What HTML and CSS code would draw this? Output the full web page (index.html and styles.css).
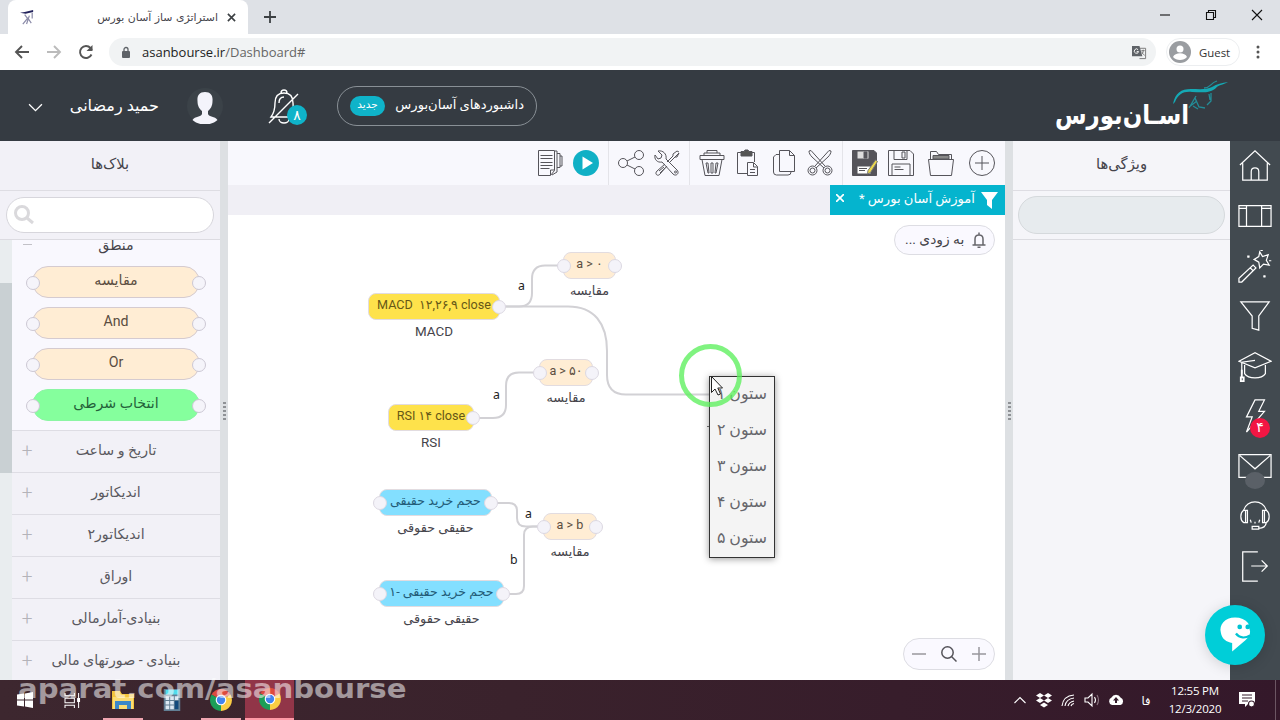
FILE: index.html
```html
<!DOCTYPE html>
<html lang="fa">
<head>
    <meta charset="UTF-8">
    <meta name="viewport" content="width=device-width, initial-scale=1.0">
    <title>استراتژی ساز آسان بورس</title>
    <link rel="stylesheet" href="styles.css">
</head>
<body>
<!-- Browser window -->
<div class="tabstrip">
    <div class="browser-tab">
        <svg class="favicon" viewBox="0 0 16 16"><path d="M0 3l5-1 9-2v2L6 4z" fill="#23235c"/><path d="M5 5l3 4-5 6M8 8l4 6M13 3v6M10 6l-3 9" fill="none" stroke="#8b8ba8" stroke-width="1.3"/></svg>
        <span class="tab-title" dir="rtl">استراتژی ساز آسان بورس</span>
        <svg class="tab-close" viewBox="0 0 10 10"><path d="M1 1l8 8M9 1l-8 8"/></svg>
    </div>
    <svg class="new-tab" viewBox="0 0 12 12"><path d="M6 0v12M0 6h12"/></svg>
    <div class="window-buttons">
        <svg viewBox="0 0 12 12"><path d="M1 6h10"/></svg>
        <svg viewBox="0 0 12 12"><path d="M1.5 3.5h7v7h-7zM3.5 3.5v-2h7v7h-2"/></svg>
        <svg viewBox="0 0 12 12"><path d="M1 1l10 10M11 1L1 11"/></svg>
    </div>
</div>
<div class="addressbar">
    <svg class="nav-icon" viewBox="0 0 16 16"><path d="M15 8H2M8 2L2 8l6 6"/></svg>
    <svg class="nav-icon disabled" viewBox="0 0 16 16"><path d="M1 8h13M8 2l6 6-6 6"/></svg>
    <svg class="nav-icon" viewBox="0 0 16 16"><path d="M13.5 10.500A6 6 0 1 1 12.500 4L14 6"/><path d="M14.500 1v6h-6z" fill="#555" stroke="none"/></svg>
    <div class="omnibox">
        <svg class="lock" viewBox="0 0 10 12"><rect x="1" y="4.500" width="8" height="7" rx="1" fill="#5f6368"/><path d="M3 5V3a2 2 0 0 1 4 0v2" fill="none" stroke="#5f6368" stroke-width="1.300"/></svg>
        <span class="url">asanbourse.ir<span>/Dashboard#</span></span>
        <svg class="translate" viewBox="0 0 16 16"><path d="M0 1h8l3 11H0z" fill="#5f6368"/><path d="M8.500 3.500h6v11H8M10 6h3.500M12 5v1c0 2-1 4-3 5M10.500 7c.5 2 1.500 3 3 4" fill="none" stroke="#777"/><path d="M6.500 5A2.300 2.300 0 1 0 7 7H5" fill="none" stroke="#fff"/></svg>
    </div>
    <div class="profile">
        <svg viewBox="0 0 22 22"><circle cx="11" cy="11" r="11" fill="#9a9da1"/><circle cx="11" cy="8" r="3.500" fill="#fff"/><path d="M4 16c2-5 12-5 14 0-3 4-11 4-14 0z" fill="#fff"/></svg>
        <span>Guest</span>
    </div>
    <svg class="kebab" viewBox="0 0 4 14"><circle cx="2" cy="2" r="1.500"/><circle cx="2" cy="7" r="1.500"/><circle cx="2" cy="12" r="1.500"/></svg>
</div>

<!-- Site header -->
<header class="header">
    <svg class="chevron" viewBox="0 0 14 8"><path d="M1 1l6 6 6-6"/></svg>
    <span class="user-name" dir="rtl">حمید رمضانی</span>
    <svg class="avatar" viewBox="0 0 36 36"><circle cx="18" cy="18" r="18" fill="#3b4248"/><path d="M18 4c-6 0-8 4-7.500 9 0 5 2 8 4.500 10v3c-1 3-7 2-9.500 6 6 6 19 6 25 0-2.500-4-8.500-3-9.500-6v-3c2.500-2 4.500-5 4.500-10C26 8 24 4 18 4z" fill="#f4f4fb"/></svg>
    <div class="bell">
        <svg viewBox="0 0 32 38"><path d="M3 30c3-4 4-7 4-14 0-6 3-10 9-10s9 4 9 10c0 7 1 10 4 14zM13 6a3 3 0 1 1 6 0M11 32a5 4 0 0 0 10 0M1 36L30 7M11 16c0-4 2-6 5-6"/></svg>
        <span class="bell-count">۸</span>
    </div>
    <div class="dashboards">
        <span class="badge-new">جدید</span>
        <span class="dashboards-text" dir="rtl">داشبوردهای آسان‌بورس</span>
    </div>
    <div class="logo">
        <span class="logo-text" dir="rtl">اسـان‌بورس</span>
        <svg class="logo-cat" viewBox="0 0 58 34"><path d="M2 24C4 13 10 9 20 9c8 0 15 1 21-2 5-3 10-4 16-5-5 3-10 3-12 6-7 6-16 4-24 4-8-1-14 2-17 10z" fill="#15a9b4"/><path d="M33 8c7 0 6-5 13-7M40 13v8l-4 4M38 14l1 6M25 16l-7 12M24 18l4 9 6 1M18 27l8-6M22 26l5 3" fill="none" stroke="#238d98" stroke-width="1.300"/></svg>
    </div>
</header>

<main class="workspace">
    <!-- Blocks panel -->
    <aside class="blocks">
        <h2 class="panel-title">بلاک‌ها</h2>
        <div class="search-row">
            <div class="search">
                <svg viewBox="0 0 20 20"><circle cx="8" cy="8" r="6.500"/><path d="M13 13l6 5"/></svg>
            </div>
        </div>
        <div class="tree">
            <div class="scrollbar"><div class="scroll-thumb"></div></div>
            <div class="tree-list" dir="rtl">
                <div class="group-open"><span>منطق</span><i></i></div>
                <div class="block">مقایسه</div>
                <div class="block">And</div>
                <div class="block">Or</div>
                <div class="block green">انتخاب شرطی</div>
                <div class="group"><span>تاریخ و ساعت</span><i>+</i></div>
                <div class="group"><span>اندیکاتور</span><i>+</i></div>
                <div class="group"><span>اندیکاتور۲</span><i>+</i></div>
                <div class="group"><span>اوراق</span><i>+</i></div>
                <div class="group"><span>بنیادی-آمارمالی</span><i>+</i></div>
                <div class="group"><span>بنیادی - صورتهای مالی</span><i>+</i></div>
            </div>
        </div>
    </aside>
    <div class="splitter"><i></i><i></i><i></i><i></i><i></i></div>

    <!-- Editor -->
    <section class="editor">
        <div class="toolbar">
            <div class="tools">
                <svg viewBox="0 0 26 26"><path d="M1.500.5h16v20l-4 5h-12zM13.500 25v-5h4M18 1h2v21l-5 3M20 3.500h3v14h-3M23 6h2v10h-2M3.500 5.500h12M3.500 8.500h12M3.500 12.500h12M3.500 15.500h12M3.500 18.500h9"/></svg>
                <svg viewBox="0 0 26 26"><circle cx="13" cy="13" r="13" fill="#10b0c5" stroke="none"/><path d="M9.500 6.500v13L20 13z" fill="#fff" stroke="none"/></svg>
            </div>
            <div class="tools">
                <svg viewBox="0 0 26 26"><circle cx="5" cy="13" r="4.500"/><circle cx="21" cy="5" r="4.500"/><circle cx="21" cy="21" r="4.500"/><path d="M9 11l8-4M9 15l8 4"/></svg>
                <svg viewBox="0 0 26 26"><path d="M4 1l4 4-1 3-3 1-3-4c-1 4 2 8 7 7l11 12c3 3 7-1 4-4L12 9c1-5-3-9-8-8zM25 2l-2-1-4 3v2l-6 6M15 13l6-6h2l2-4zM11 14l-8 7c-3 3 1 6 3 3l7-8M5 21l5-4M6 23l5-5"/><circle cx="21.500" cy="22" r="1"/></svg>
            </div>
            <div class="tools">
                <svg viewBox="0 0 26 26"><path d="M1 5.500h24v4H1zM5 5.500V3h3V.5h10V3h3v2.500M8 3h10M3 9.500l3 16h14l3-16M7 13l2 10h1l-1-10zM12 13h2v10h-2zM17 13h2l-2 10h-1z"/></svg>
                <svg viewBox="0 0 26 26"><path d="M12 23.500H2.500v-21H7M16 2.500h3.500V12M12.500 12.500h6l4 4v9h-10zM18.500 13v4h4M15 19.500h5M15 22.500h5"/><path d="M6 1.500h3l1-1.500h3l1 1.500h3V6H6z" fill="#555"/></svg>
                <svg viewBox="0 0 26 26"><path d="M8.500.5h10l5 5v16h-15zM18.500.5v5h5M8 4.500H5L2.500 7v15q0 3 3 3H17q3 0 3-3"/></svg>
                <svg viewBox="0 0 26 26"><circle cx="5.500" cy="20.500" r="4.500"/><circle cx="20.500" cy="20.500" r="4.500"/><circle cx="5.500" cy="20.500" r="2.500"/><circle cx="20.500" cy="20.500" r="2.500"/><path d="M2 1c0 2 1 4 3 6l12 11M2 1l2-.5L18 16M24 1c0 2-1 4-3 6L9 18M24 1l-2-.5L8 16"/></svg>
            </div>
            <div class="tools wide">
                <svg viewBox="0 0 26 26"><path d="M1.500.5H23L25.500 3v22.500h-24z" fill="#55545a"/><path d="M6 1h12v8H6z" fill="#ddd"/><path d="M13 2h3v6h-3z" fill="#55545a"/><path d="M6 16h14v8H6z" fill="#fff"/><path d="M8 18.500h8M8 20.500h6"/><path d="M24.500 10l2 1.500-7 11-3 1.500.5-3.500z" fill="#edd94d" stroke="#777"/></svg>
                <svg viewBox="0 0 26 26"><path d="M.5.5H22L25.500 4v21.500H.5zM6 .5h13v9H6zM14 2h3v6h-3zM4 25V14h18v11M6.500 17h6M6.500 19.500h9"/></svg>
                <svg viewBox="0 0 26 26"><path d="M.5 9.500h25l-2 16h-21zM2.500 9V1.500h6l2 3h13V9M5 7h16"/><path d="M5 5.500h16v3.500H5z" fill="#888"/></svg>
                <svg viewBox="0 0 26 26"><circle cx="13" cy="13" r="12.500"/><path d="M13 6v14M6 13h14"/></svg>
            </div>
        </div>
        <div class="doc-tabs">
            <div class="doc-tab">
                <svg class="doc-close" viewBox="0 0 8 8"><path d="M0 0l8 8M8 0L0 8"/></svg>
                <span dir="rtl">آموزش آسان بورس *</span>
                <svg class="doc-filter" viewBox="0 0 17 17"><path d="M0 0h17l-6 8v9l-5-4V8z"/></svg>
            </div>
        </div>
        <div class="canvas">
            <svg class="wires" viewBox="0 0 777 465">
                <path d="M272 91.500H291Q304 91.500 304 78V64Q304 50.500 317 50.500H335"/>
                <path d="M272 91.500H340C366 91.500 379 108 379 136V160Q379 179.500 398 179.500H482"/>
                <path d="M246 203H265Q278 203 278 190V171Q278 157.500 291 157.500H311"/>
                <path d="M264 288H281Q289 288 289 296V303Q289 311.500 298 311.500H315"/>
                <path d="M276 379H288Q296 379 296 371V320Q296 311.500 305 311.500H315"/>
                <path d="M479 211.500H482" stroke="#777" stroke-width="1"/>
            </svg>
            <span class="wire-label la">a</span>
            <span class="wire-label lb">a</span>
            <span class="wire-label lc">a</span>
            <span class="wire-label ld">b</span>

            <div class="node beige both n1"><div class="node-box">a &gt; ۰</div><div class="node-name">مقایسه</div></div>
            <div class="node yellow n2"><div class="node-box">MACD&nbsp; ۱۲,۲۶,۹ close</div><div class="node-name">MACD</div></div>
            <div class="node beige both n3"><div class="node-box">a &gt; ۵۰</div><div class="node-name">مقایسه</div></div>
            <div class="node yellow n4"><div class="node-box">RSI ۱۴ close</div><div class="node-name">RSI</div></div>
            <div class="node blue both n5"><div class="node-box" dir="rtl">حجم خرید حقیقی</div><div class="node-name" dir="rtl">حقیقی حقوقی</div></div>
            <div class="node beige both n6"><div class="node-box">a &gt; b</div><div class="node-name">مقایسه</div></div>
            <div class="node blue both n7"><div class="node-box" dir="rtl">حجم خرید حقیقی -۱</div><div class="node-name" dir="rtl">حقیقی حقوقی</div></div>

            <div class="soon">
                <span dir="rtl">به زودی ...</span>
                <svg viewBox="0 0 14 16"><path d="M.5 13h13M3 13V7q0-4 4-4t4 4v6M7 .5v2M5.500 15.200h3"/></svg>
            </div>
            <div class="zoom-bar">
                <svg viewBox="0 0 16 16"><path d="M1 8h14"/></svg>
                <svg class="lens" viewBox="0 0 16 16"><circle cx="6.500" cy="6.500" r="5.700"/><path d="M10.500 10.500l5 5"/></svg>
                <svg viewBox="0 0 16 16"><path d="M1 8h14M8 1v14"/></svg>
            </div>

            <div class="menu" dir="rtl">
                <div>ستون ۱</div>
                <div>ستون ۲</div>
                <div>ستون ۳</div>
                <div>ستون ۴</div>
                <div>ستون ۵</div>
            </div>
            <div class="click-ring"></div>
            <svg class="cursor" viewBox="0 0 12 20"><path d="M.5.5v16l3.500-3.500 3 6 2.500-1-2.700-6H11.500z"/></svg>
        </div>
    </section>
    <div class="splitter"><i></i><i></i><i></i><i></i><i></i></div>

    <!-- Properties panel -->
    <aside class="properties">
        <h2 class="panel-title">ویژگی‌ها</h2>
        <div class="property-row"><div class="property-box"></div></div>
    </aside>

    <nav class="rail">
        <a><svg viewBox="0 0 36 36"><path d="M2 17L18 2l16 15M5 15v18h26V15M14 33V24q0-4 4-4t4 4v9"/></svg></a>
        <a><svg viewBox="0 0 36 36"><path d="M1 7h34v22H1zM9 7v22M25 7v22M1 10h8M25 10h10"/></svg></a>
        <a><svg viewBox="0 0 36 36"><path d="M1 34v-3l15-14 3 3L4 35H1zM13 20l3 3M23 3l3 5 6-2-2 6 3 5-6-1-4 4-1-6-5-3 5-3z"/><path d="M11 7v2M10 8h2M25 1v1M34 12v1M28 28v2M27 29h2" stroke-width="2.500"/></svg></a>
        <a><svg viewBox="0 0 36 36"><path d="M3 3h30L22 18v15l-7-2V18z"/></svg></a>
        <a><svg viewBox="0 0 36 36"><path d="M1 13L18 4l17 9-17 7zM7 17v9c4 6 18 6 22 0v-9M18 12L4 14v12"/><path d="M4 22v9M3 29v5h3v-5" stroke-width="2"/></svg></a>
        <a><svg viewBox="0 0 36 36"><path d="M18 1h10l-6 12h6L9 35l6-16H9z"/></svg><b class="rail-count">۴</b></a>
        <a><svg viewBox="0 0 36 36"><path d="M1 6h34v24H1zM2 7l16 14L34 7"/></svg><b class="rail-dot"></b></a>
        <a><svg viewBox="0 0 36 36"><path d="M6 12C9 0 27 0 30 12M6 12h4v13H6Q3 23 3 18.500T6 12zM30 12h-4v13h4q3-2 3-6.500T30 12zM8 12v13M28 12v13M30 25q-1 6-8 6M15 29h7v3h-7zM13 22l1 3M18 24v2M23 22l-1 3"/></svg></a>
        <a><svg viewBox="0 0 36 36"><path d="M21 3H5v31h16M14 18h17M25 12l6 6-6 6"/></svg></a>
    </nav>

    <div class="chat">
        <svg viewBox="0 0 36 40"><path d="M18 2C7 2 1 10 3 18c1 7 6 10 12 11v9l14-12c3-3 5-5 5-9L32 8C29 4 24 2 18 2z" fill="#fff"/><path d="M19 19c4 5 10 5 15 2" fill="none" stroke="#00c4d3" stroke-width="2.500"/><circle cx="23" cy="12" r="2.500" fill="#00c4d3"/><circle cx="31.500" cy="12" r="2.500" fill="#00c4d3"/></svg>
    </div>
</main>

<!-- Desktop taskbar -->
<footer class="taskbar">
    <div class="task"><svg class="win" viewBox="0 0 16 16"><path d="M0 2.500l7-1v6H0zM8 1.400L16 0v7.500H8zM0 8.500h7v6l-7-1zM8 8.500h8V16l-8-1.400z"/></svg></div>
    <div class="task"><svg class="taskview" viewBox="0 0 18 16"><path d="M1 0v3h10V0M1 5.500h10v5H1zM1 16v-3h10v3M15.500 0v16"/><path d="M14.500 6h2v3h-2z" fill="#fff"/></svg></div>
    <div class="task open"><svg viewBox="0 0 22 22"><path d="M0 2h8l2 3h12v15H0z" fill="#f3c53d"/><path d="M1 8h20v12H1z" fill="#fbdc73"/><path d="M3 12h16v8h-4v-4H7v4H3z" fill="#3a87c8"/></svg></div>
    <div class="task"><svg viewBox="0 0 22 24"><path d="M2 0h18v24H2z" fill="#627f94"/><path d="M4 1h14v5H4z" fill="#52dcec"/><path d="M4 8h4v4H4zM9 8h4v4H9zM14 8h4v4h-4zM4 13h4v4H4zM9 13h4v4H9zM4 18h4v4H4zM9 18h4v4H9z" fill="#dce8f2"/><path d="M14 13h4v9h-4z" fill="#124a7c"/></svg></div>
    <div class="task open"><svg viewBox="0 0 22 22"><path d="M11 11L1.500 5.500A11 11 0 0 1 20.500 5.500z" fill="#dd4b3e"/><path d="M11 11L1.500 5.500A11 11 0 0 0 11 22z" fill="#1b9e58"/><path d="M11 11l9.500-5.500A11 11 0 0 1 11 22z" fill="#fbcd44"/><circle cx="11" cy="11" r="5.300" fill="#fff"/><circle cx="11" cy="11" r="4.200" fill="#4384f0"/></svg></div>
    <div class="task open active"><svg viewBox="0 0 22 22"><path d="M11 11L1.500 5.500A11 11 0 0 1 20.500 5.500z" fill="#dd4b3e"/><path d="M11 11L1.500 5.500A11 11 0 0 0 11 22z" fill="#1b9e58"/><path d="M11 11l9.500-5.500A11 11 0 0 1 11 22z" fill="#fbcd44"/><circle cx="11" cy="11" r="5.300" fill="#fff"/><circle cx="11" cy="11" r="4.200" fill="#4384f0"/></svg></div>
    <div class="tray">
        <svg viewBox="0 0 16 16"><path d="M2.500 11L8 5.500l5.500 5.500"/></svg>
        <svg class="solid" viewBox="0 0 16 16"><path d="M4 1l4 2.500L4 6 0 3.500zM12 1l4 2.500L12 6 8 3.500zM4 6l4 2.500L4 11 0 8.500zM12 6l4 2.500-4 2.500-4-2.500zM8 10.500l4 2.500-4 2.500L4 13z"/></svg>
        <svg viewBox="0 0 16 16"><path d="M2 14Q3 4 14 3M5 14q1-7 9-8M8 14q1-4 6-5M11 14q.5-2 3-2.500"/></svg>
        <svg viewBox="0 0 16 16"><path d="M1 6h3l4-4v12l-4-4H1zM10.500 5q2 3 0 6"/><path d="M13 3q3 5 0 10" stroke="#8d7682"/></svg>
        <svg class="solid" viewBox="0 0 16 16"><path d="M4 13a4 4 0 0 1-.5-7.500 5 5 0 0 1 9 0A4 4 0 0 1 12.500 13z"/><path d="M8 5l3 3.500H9V11H7V8.500H5z" fill="#351b2b"/></svg>
        <span class="lang">فا</span>
        <div class="clock"><span>12:55 PM</span><span>12/3/2020</span></div>
        <svg class="solid notify" viewBox="0 0 16 16"><path d="M0 0h16v12h-7l-3 3v-3H0z"/><path d="M3 3h10M3 6h10M3 9h6" stroke="#351b2b"/><circle cx="12.500" cy="12" r="3" stroke="#351b2b"/></svg>
    </div>
    <div class="watermark">aparat.com/asanbourse</div>
</footer>
</body>
</html>
```
FILE: styles.css
```css
* {
    box-sizing: border-box;
}

body {
    margin: 0;
    width: 1280px;
    height: 720px;
    overflow: hidden;
    display: flex;
    flex-direction: column;
    background: #fff;
    font-family: Roboto, "DejaVu Sans", sans-serif;
    color: #45444b;
}

svg {
    display: block;
    flex: none;
}

/* Browser window */
.tabstrip {
    height: 34px;
    display: flex;
    align-items: center;
    background: #dee1e6;
    padding-left: 8px;
}

.browser-tab {
    width: 240px;
    height: 34px;
    display: flex;
    align-items: center;
    background: #fff;
    border-radius: 8px 8px 0 0;
    padding: 0 12px;
}

.favicon {
    width: 15px;
    height: 15px;
}

.tab-title {
    flex: 1;
    padding-right: 9px;
    font: 10.9px "DejaVu Sans", sans-serif;
    text-align: right;
    direction: ltr;
    white-space: nowrap;
}

.tab-close,
.new-tab {
    width: 9px;
    height: 9px;
    stroke: #3c4043;
    stroke-width: 1.8;
    fill: none;
}

.new-tab {
    width: 12px;
    height: 12px;
    margin-left: 16px;
}

.window-buttons {
    display: flex;
    gap: 34px;
    margin-left: auto;
    padding: 0 17px 5px 0;
}

.window-buttons svg {
    width: 12px;
    height: 12px;
    fill: none;
    stroke: #111;
    stroke-width: 1.1;
}

.addressbar {
    height: 36px;
    display: flex;
    align-items: center;
    background: #fff;
    padding-left: 14px;
}

.nav-icon {
    width: 16px;
    height: 16px;
    margin-right: 16px;
    fill: none;
    stroke: #555;
    stroke-width: 1.9;
}

.nav-icon.disabled {
    stroke: #bbb;
}

.omnibox {
    width: 1047px;
    height: 28px;
    display: flex;
    align-items: center;
    margin-left: -1px;
    padding: 0 9px 0 12px;
    border-radius: 14px;
    background: #f1f3f4;
}

.lock {
    width: 10px;
    height: 13px;
    margin-right: 11px;
}

.url {
    flex: 1;
    font-family: "Open Sans", sans-serif;
    font-size: 13px;
    color: #222;
}

.url span {
    color: #666;
}

.translate {
    width: 15px;
    height: 15px;
}

.profile {
    width: 74px;
    height: 28px;
    display: flex;
    align-items: center;
    gap: 8px;
    margin-left: 10px;
    padding-left: 2px;
    border: 1px solid #eceef0;
    border-radius: 14px;
    font-family: "Open Sans", sans-serif;
    font-size: 11.4px;
    color: #333;
}

.profile svg {
    width: 22px;
    height: 22px;
}

.kebab {
    width: 4px;
    height: 14px;
    margin-left: 16px;
    fill: #555;
}

/* Site header */
.header {
    height: 71px;
    display: flex;
    align-items: center;
    background: #353b42;
    color: #fff;
    padding-left: 28px;
}

.chevron {
    width: 15px;
    height: 9px;
    margin-top: 3px;
    fill: none;
    stroke: #fff;
    stroke-width: 1.2;
}

.user-name {
    width: 89px;
    margin-left: 27px;
    text-align: center;
    font-size: 16px;
    white-space: nowrap;
}

.avatar {
    width: 36px;
    height: 36px;
    margin-left: 28px;
}

.bell {
    position: relative;
    margin: 1px 0 0 45px;
}

.bell svg {
    width: 32px;
    height: 38px;
    fill: none;
    stroke: #fff;
    stroke-width: 1.4;
}

.bell-count {
    position: absolute;
    left: 19px;
    top: 18px;
    width: 20px;
    height: 20px;
    line-height: 20px;
    border-radius: 50%;
    background: #0fb3c9;
    font-size: 14px;
    text-align: center;
}

.dashboards {
    width: 200px;
    height: 40px;
    display: flex;
    align-items: center;
    justify-content: space-between;
    margin-left: 37px;
    padding: 0 12px;
    border: 1px solid #899096;
    border-radius: 20px;
    white-space: nowrap;
}

.badge-new {
    width: 35px;
    height: 20px;
    line-height: 18px;
    border-radius: 10px;
    background: #0fb3c9;
    font-size: 10.5px;
    text-align: center;
}

.dashboards-text {
    font-size: 13.1px;
    padding-bottom: 2px;
}

.logo {
    display: flex;
    margin: 0 51px 0 auto;
    height: 56px;
}

.logo-text {
    align-self: flex-end;
    line-height: 36px;
    font-size: 22.9px;
    font-weight: bold;
    white-space: nowrap;
    transform: scaleY(1.15);
}

.logo-cat {
    width: 58px;
    height: 34px;
    margin: 2px 0 0 -18px;
}

/* Panels */
.workspace {
    position: relative;
    height: 539px;
    display: flex;
}

.blocks {
    width: 220px;
    display: flex;
    flex-direction: column;
    background: #f2f1f7;
}

.panel-title {
    height: 50px;
    margin: 0;
    line-height: 46px;
    font-size: 14.8px;
    font-weight: normal;
    text-align: center;
    border-bottom: 1px solid #dedde3;
}

.search-row {
    height: 49px;
    padding: 6px 6px;
    border-bottom: 1px solid #dcdbe1;
}

.search {
    height: 36px;
    display: flex;
    align-items: center;
    padding-left: 7px;
    background: #fff;
    border: 1px solid #d7d6dc;
    border-radius: 18px;
}

.search svg {
    width: 20px;
    height: 20px;
    fill: none;
    stroke: #dad9dc;
    stroke-width: 3;
}

.tree {
    height: 440px;
    display: flex;
    overflow: hidden;
}

.scrollbar {
    width: 12px;
    background: #e9edef;
    padding-top: 43px;
}

.scroll-thumb {
    height: 190px;
    background: #c9d0d3;
}

.tree-list {
    flex: 1;
    background: #f9f8fe;
    font-size: 14.2px;
}

.group-open {
    height: 26px;
    display: flex;
    line-height: 10px;
}

.group-open span,
.group span {
    width: 208px;
    text-align: center;
}

.group i {
    width: 16px;
    margin-right: -23px;
    font: 300 19px/40px Roboto, sans-serif;
    color: #b4b3b9;
    text-align: center;
}

.group-open i {
    width: 9px;
    height: 1px;
    margin: 4px -20px 0 0;
    background: #c2c1c7;
}

.block {
    position: relative;
    height: 32px;
    margin: 0 20px 9px;
    line-height: 27px;
    text-align: center;
    color: #5b4d41;
    background: #ffedd4;
    border: 1px solid #d5cbd0;
    border-radius: 16px;
}

.block.green {
    background: #85ff9d;
    border-color: #8cf5a4;
    color: #24613a;
}

.block::before,
.block::after,
.node-box::before,
.node-box::after {
    content: "";
    position: absolute;
    top: 9px;
    width: 12px;
    height: 12px;
    border: 1px solid #ccc8d4;
    border-radius: 50%;
    background: #f5f4fa;
}

.block::before {
    left: -7px;
}

.block::after {
    right: -7px;
}

.group {
    height: 42px;
    display: flex;
    line-height: 39px;
    background: #f2f1f7;
    border-top: 1px solid #dedde4;
    color: #5a5960;
    white-space: nowrap;
}

.splitter {
    width: 8px;
    display: flex;
    flex-direction: column;
    align-items: center;
    justify-content: center;
    gap: 2px;
    background: #dde0e3;
}

.splitter i {
    width: 3px;
    height: 2px;
    background: #8f9296;
}

/* Editor */
.editor {
    width: 777px;
    display: flex;
    flex-direction: column;
}

.toolbar {
    height: 44px;
    display: flex;
    justify-content: flex-end;
    background: #f8f8fd;
    padding-right: 10px;
}

.tools {
    display: flex;
    align-items: center;
    gap: 10px;
    padding-left: 9px;
}

.tools + .tools {
    margin-left: 9px;
    border-left: 1px solid #e4e4e9;
}

.tools.wide {
    gap: 11px;
    padding-left: 8px;
}

.tools.wide svg:nth-child(3) {
    margin-left: 3px;
}

.tools.wide svg:nth-child(4) {
    margin-left: 4px;
}

.tools svg {
    width: 26px;
    height: 26px;
    overflow: visible;
    fill: none;
    stroke: #55545a;
}

.doc-tabs {
    height: 30px;
    display: flex;
    justify-content: flex-end;
    background: #f0eff5;
}

.doc-tab {
    width: 175px;
    display: flex;
    align-items: center;
    padding: 0 7px 0 6px;
    background: #05b4ce;
    color: #fff;
    white-space: nowrap;
}

.doc-tab span {
    width: 116px;
    margin-left: 15px;
    padding-bottom: 3px;
    font-size: 13.1px;
    text-align: right;
}

.doc-close {
    width: 8px;
    height: 8px;
    margin-bottom: 5px;
    fill: none;
    stroke: #fff;
    stroke-width: 1.7;
}

.doc-filter {
    width: 17px;
    height: 17px;
    margin-left: auto;
    fill: #fff;
}

.canvas {
    position: relative;
    height: 465px;
    background: #fff;
}

.wires {
    position: absolute;
    left: 0;
    top: 0;
    width: 777px;
    height: 465px;
    fill: none;
    stroke: #d2d1d5;
    stroke-width: 2;
}

.wire-label {
    position: absolute;
    font-family: "Noto Sans", sans-serif;
    font-size: 12.3px;
    line-height: 16px;
    color: #222;
}

.la { left: 290px; top: 63px; }
.lb { left: 265px; top: 172px; }
.lc { left: 297px; top: 291px; }
.ld { left: 282px; top: 337px; }

.node {
    position: absolute;
    text-align: center;
    white-space: nowrap;
}

.node-box {
    position: relative;
    height: 27px;
    line-height: 22px;
    font-size: 12.6px;
    border: 1px solid #e2dce0;
    border-radius: 8px;
}

.node-box::before,
.node-box::after {
    top: 6px;
    border-color: #dcd8e2;
    background: #f4f3f9;
}

.node-box::before {
    left: -7px;
    display: none;
}

.node-box::after {
    right: -7px;
}

.both .node-box::before {
    display: block;
}

.node-name {
    font-size: 13.4px;
    line-height: 24px;
}

.beige .node-box {
    background: #ffedd4;
    color: #5b4d41;
}

.yellow .node-box {
    background: #fee24b;
    color: #665817;
}

.blue .node-box {
    background: #83dfff;
    color: #235c78;
    font-size: 12.7px;
}

.beige .node-name,
.blue .node-name {
    font-size: 12.8px;
}

.n1 { left: 335px; top: 37px; width: 53px; }
.n2 { left: 140px; top: 78px; width: 132px; }
.n3 { left: 311px; top: 144px; width: 54px; }
.n4 { left: 160px; top: 189px; width: 86px; }
.n5 { left: 151px; top: 274px; width: 113px; }
.n6 { left: 315px; top: 298px; width: 54px; }
.n7 { left: 151px; top: 365px; width: 125px; }

.soon,
.zoom-bar {
    position: absolute;
    display: flex;
    align-items: center;
    background: #faf9ff;
    border: 1px solid #dddde3;
}

.soon {
    left: 666px;
    top: 10px;
    width: 101px;
    height: 30px;
    justify-content: space-between;
    padding: 0 8px 0 10px;
    border-radius: 15px;
    font-size: 13.8px;
}

.soon span {
    padding-bottom: 2px;
}

.soon svg {
    width: 14px;
    height: 16px;
    fill: none;
    stroke: #66656b;
    stroke-width: 1.5;
}

.zoom-bar {
    left: 675px;
    top: 423px;
    width: 92px;
    height: 32px;
    justify-content: space-between;
    padding: 0 7px;
    border-radius: 16px;
}

.zoom-bar svg {
    width: 16px;
    height: 16px;
    fill: none;
    stroke: #98979d;
    stroke-width: 1.5;
}

.zoom-bar .lens {
    stroke: #55545a;
}

.menu {
    position: absolute;
    left: 481px;
    top: 161px;
    width: 66px;
    height: 182px;
    background: #f4f4f4;
    border: 1px solid #333;
    box-shadow: 0 1px 7px rgba(0, 0, 0, .4);
    font-size: 15.8px;
    line-height: 34px;
    color: #66666b;
    text-align: center;
    white-space: nowrap;
}

.menu div {
    height: 36px;
}

.click-ring {
    position: absolute;
    left: 451px;
    top: 129px;
    width: 63px;
    height: 63px;
    border: 5px solid rgba(92, 240, 92, .78);
    border-radius: 50%;
}

.cursor {
    position: absolute;
    left: 483px;
    top: 161px;
    width: 12px;
    height: 20px;
    fill: #fff;
    stroke: #222;
}

/* Properties and icon rail */
.properties {
    width: 217px;
    background: #f5f5f9;
}

.property-row {
    height: 49px;
    padding: 5px;
    border-bottom: 1px solid #dcdce1;
}

.property-box {
    height: 38px;
    background: #e7ebee;
    border: 1px solid #d5d9dc;
    border-radius: 19px;
}

.rail {
    width: 50px;
    background: #424a50;
}

.rail a {
    position: relative;
    height: 50px;
    display: flex;
    align-items: center;
    justify-content: center;
}

.rail svg {
    width: 34px;
    height: 34px;
    fill: none;
    stroke: #fff;
    stroke-width: 1.3;
}

.rail-count,
.rail-dot {
    position: absolute;
    left: 20px;
    top: 27px;
    width: 20px;
    height: 20px;
    line-height: 19px;
    border-radius: 50%;
    background: #f21643;
    color: #fff;
    font-size: 14px;
    font-weight: normal;
    text-align: center;
}

.rail-dot {
    left: 15px;
    top: 31px;
    height: 17px;
    background: #5a6067;
}

.chat {
    position: absolute;
    left: 1205px;
    top: 464px;
    width: 60px;
    height: 60px;
    border-radius: 50%;
    background: #00ced8;
    box-shadow: 0 2px 14px rgba(0, 0, 0, .15);
    padding: 10px 0 0 13px;
}

.chat svg {
    width: 34px;
    height: 39px;
}

/* Desktop taskbar */
.taskbar {
    position: relative;
    height: 40px;
    display: flex;
    background: linear-gradient(90deg, #3d272f 0, #3a222c 40%, #34182a);
}

.task {
    width: 49px;
    display: flex;
    align-items: center;
    justify-content: center;
}

.task svg {
    width: 22px;
    height: 22px;
}

.task .win {
    width: 16px;
    height: 16px;
    fill: #fff;
}

.task .taskview {
    width: 17px;
    height: 15px;
    margin-right: 3px;
    fill: none;
    stroke: #fff;
    stroke-width: 1.1;
}

.task.open {
    background: linear-gradient(#efa5b0, #efa5b0) center bottom / 40px 2px no-repeat;
}

.task.open.active {
    background: #913548;
    border-bottom: 2px solid #ff9aa7;
}

.tray {
    display: flex;
    align-items: center;
    margin-left: auto;
    margin-right: 4px;
    border-right: 1px solid #6c5663;
    color: #fff;
    font-family: "Open Sans", "DejaVu Sans", sans-serif;
    font-size: 11.5px;
}

.tray svg {
    width: 16px;
    height: 16px;
    margin-right: 8px;
    fill: none;
    stroke: #fff;
    stroke-width: 1.1;
}

.tray .solid {
    fill: #fff;
    stroke: none;
}

.tray .lang {
    width: 14px;
    margin-left: 7px;
    text-align: center;
}

.clock {
    width: 58px;
    margin-left: 13px;
    display: flex;
    flex-direction: column;
    text-align: center;
    line-height: 18px;
    letter-spacing: -.2px;
}

.tray .notify {
    margin: 0 20px 0 15px;
}

.watermark {
    position: absolute;
    left: 18px;
    top: -7px;
    font: bold 26px/32px "DejaVu Sans", sans-serif;
    color: rgba(255, 255, 255, .53);
    white-space: nowrap;
    transform: scaleX(1.122);
    transform-origin: left;
}
```
